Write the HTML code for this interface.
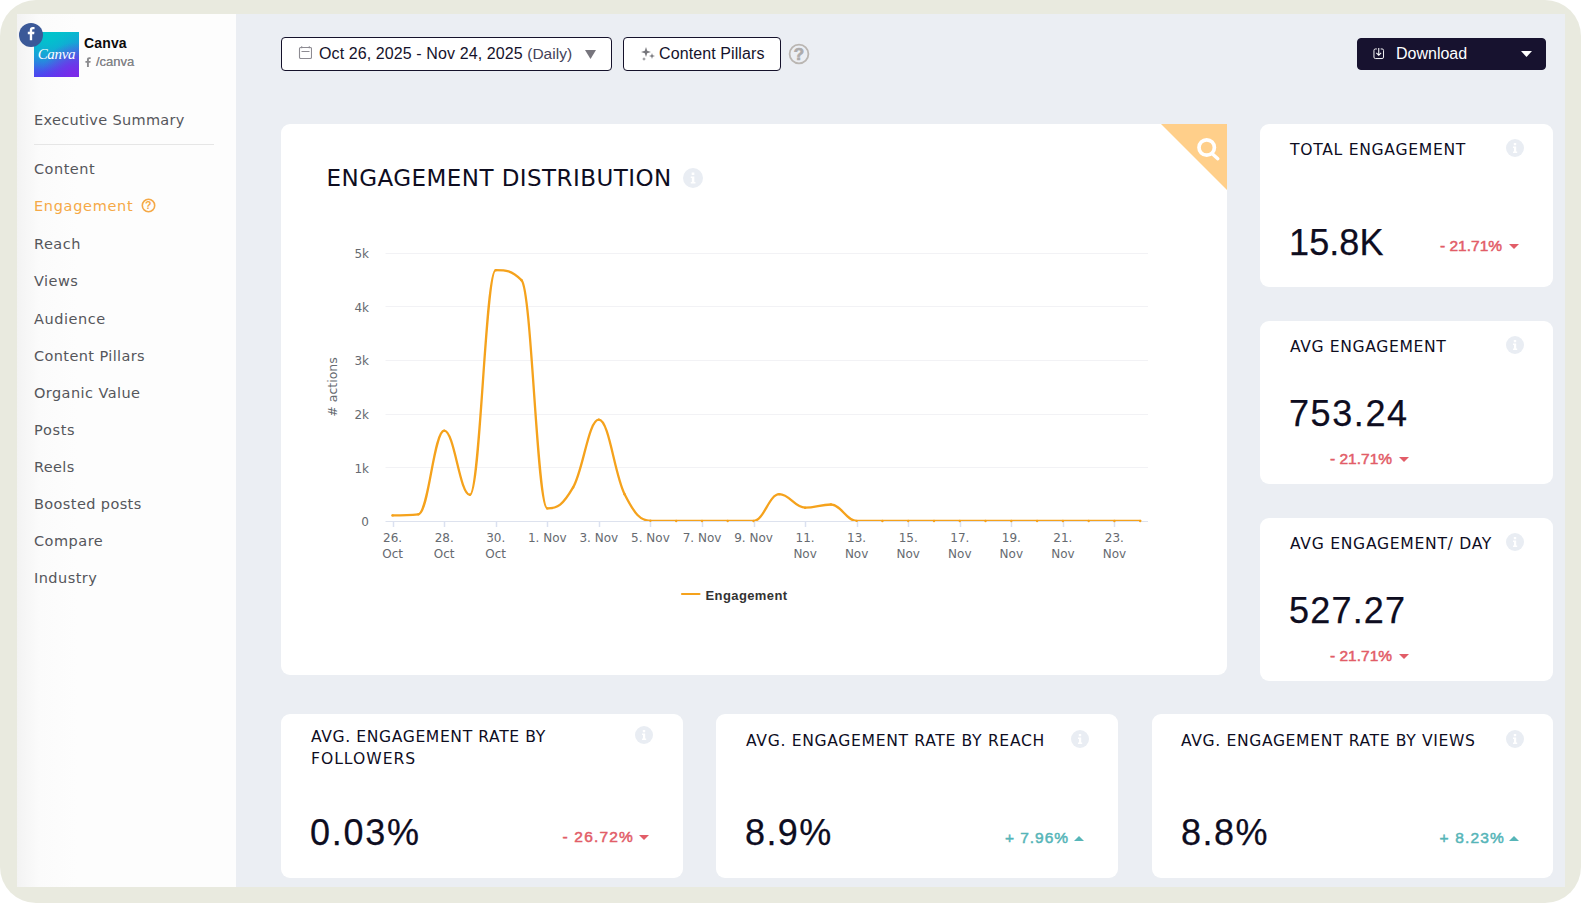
<!DOCTYPE html>
<html lang="en">
<head>
<meta charset="utf-8">
<title>Canva – Engagement</title>
<style>
*{box-sizing:border-box;margin:0;padding:0}
html,body{width:1581px;height:903px;overflow:hidden;background:#fff}
body{font-family:"DejaVu Sans","Liberation Sans",sans-serif;color:#0e0d1f;position:relative}
.frame{position:absolute;left:0;top:0;width:1581px;height:903px;background:#e9eadf;border-radius:36px}
.app{position:absolute;left:17px;top:14px;width:1548px;height:873px;background:#ebeef3;overflow:hidden}
/* ---------- sidebar ---------- */
.sidebar{position:absolute;left:0;top:0;width:219px;height:873px;background:linear-gradient(90deg,#f3f3f3 0,#fbfbfb 22px,#fdfdfd 60px,#fdfdfd 100%)}
.brand{position:absolute;left:0;top:0;width:219px;height:80px}
.brand .logo{position:absolute;left:17px;top:18px;width:45px;height:45px;background:
 radial-gradient(circle at 90% 95%,#7d2ae8 0,rgba(125,42,232,0) 55%),
 radial-gradient(circle at 30% 5%,#00c4cc 0,rgba(0,196,204,0) 70%),
 linear-gradient(172deg,#00c4cc 0,#2b86e0 50%,#5a2df5 100%);
 color:#fff;font:italic 15px/45px "Liberation Serif",serif;text-align:center;letter-spacing:-.3px}
.brand .fb{position:absolute;left:2px;top:9px;width:24px;height:24px;border-radius:50%;background:#3b5998}
.brand .fb svg{position:absolute;left:0;top:0}
.brand .name{position:absolute;left:67px;top:21px;letter-spacing:.15px;font:bold 14px/16px "Liberation Sans",sans-serif;color:#0b0b0b}
.brand .handle{position:absolute;left:68px;top:41px;font:13px/14px "Liberation Sans",sans-serif;color:#858589;white-space:nowrap;text-shadow:0 0 .4px #858589}
.brand .handle svg{vertical-align:-1px;margin-right:5px}
.nav{position:absolute;left:17px;top:0;list-style:none;font-size:14.5px;color:#55565b;letter-spacing:.35px}
.nav li{position:absolute;left:0;white-space:nowrap;line-height:20px}
.nav li.active{color:#f5a947}
.nav .sep{position:absolute;left:0;top:130px;width:180px;height:1px;background:#e6e6e6}
.nav .q{display:inline-block;vertical-align:-2px;margin-left:7.500px}
/* ---------- toolbar ---------- */
.btn{position:absolute;top:23px;height:34px;border:1px solid #15122b;border-radius:4px;background:#fff;font:16px/32px "Liberation Sans",sans-serif;color:#15122b;white-space:nowrap}
.btn svg{position:absolute}
.btn span{position:absolute;top:0}
.btn em{font-style:normal;font-size:15.500px;color:#45435a;letter-spacing:0}
.btn.dark{background:#17122f;color:#fff;border-color:#17122f;height:32px;top:24px;line-height:29px}
.help{position:absolute;left:770.700px;top:28.800px}
/* ---------- cards ---------- */
.card{position:absolute;background:#fff;border-radius:9px}
.card h3{position:absolute;font-weight:400;font-size:15.600px;line-height:22px;color:#0e0d1f;letter-spacing:.7px}
.card .val{position:absolute;font-family:"Liberation Sans",sans-serif;font-size:36px;line-height:44px;color:#0e0d1f;white-space:nowrap;-webkit-text-stroke:.25px #0e0d1f}
.card .chg{position:absolute;font-family:"Liberation Sans",sans-serif;font-size:15.500px;line-height:20px;white-space:nowrap;-webkit-text-stroke:.5px currentColor}
.chg.down{color:#e25d68}
.chg.up{color:#56b5b8}
.chg i{display:inline-block;width:0;height:0;border-left:5px solid transparent;border-right:5px solid transparent;margin-left:7px;vertical-align:2px}
.chg.down i{border-top:5px solid #e25d68}
.chg.up i{border-bottom:5px solid #56b5b8;vertical-align:2px}
.info{position:absolute;width:18px;height:18px;border-radius:50%;background:#e9edf3}
.info svg{position:absolute;left:0;top:0}
.chart h2{position:absolute;left:45.500px;top:39px;font-weight:400;font-size:23px;line-height:30px;white-space:nowrap;color:#0e0d1f;letter-spacing:.45px}
.zoomcorner{position:absolute;right:0;top:0;width:66px;height:66px;overflow:hidden}
</style>
</head>
<body>
<div class="frame"></div>
<div class="app">

<aside class="sidebar">
  <div class="brand">
    <div class="logo">Canva</div>
    <div class="fb"><svg width="24" height="24" viewBox="-0.780 0.880 25.300 25.300"><path fill="#fff" d="M13.1 19v-6.3h2.1l.3-2.5h-2.4V8.7c0-.7.2-1.2 1.2-1.2h1.3V5.3c-.2 0-1-.1-1.9-.1-1.9 0-3.100 1.100-3.100 3.200v1.800H8.500v2.500h2.100V19z"/></svg></div>
    <div class="name">Canva</div>
    <div class="handle"><svg width="6" height="10.500" viewBox="0 0 7 12"><path fill="#8b8b8e" d="M4.500 12V6.600h1.800l.3-2.100H4.500V3.200c0-.6.2-1 1-1h1.100V.3C6.400.2 5.800.2 5 .2 3.400.2 2.300 1.200 2.300 2.900v1.600H.5v2.100h1.800V12z"/></svg>/canva</div>
  </div>
  <ul class="nav">
    <li style="top:96px;letter-spacing:0.32px">Executive Summary</li>
    <li class="sep"></li>
    <li style="top:145px;letter-spacing:0.50px">Content</li>
    <li style="top:182px;letter-spacing:0.68px" class="active">Engagement<svg class="q" width="15" height="15" viewBox="0 0 15 15"><circle cx="7.500" cy="7.500" r="6.200" fill="none" stroke="#f5a947" stroke-width="1.600"/><text x="7.500" y="11.300" text-anchor="middle" font-family="Liberation Sans, sans-serif" font-weight="bold" font-size="10.500" fill="#f5a947">?</text></svg></li>
    <li style="top:220px;letter-spacing:0.50px">Reach</li>
    <li style="top:257px;letter-spacing:0.46px">Views</li>
    <li style="top:295px;letter-spacing:0.53px">Audience</li>
    <li style="top:332px;letter-spacing:0.39px">Content Pillars</li>
    <li style="top:369px;letter-spacing:0.43px">Organic Value</li>
    <li style="top:406px;letter-spacing:0.67px">Posts</li>
    <li style="top:443px;letter-spacing:0.36px">Reels</li>
    <li style="top:480px;letter-spacing:0.39px">Boosted posts</li>
    <li style="top:517px;letter-spacing:0.50px">Compare</li>
    <li style="top:554px;letter-spacing:0.45px">Industry</li>
  </ul>
</aside>

<!-- toolbar -->
<div class="btn" style="left:264px;width:331px">
  <svg style="left:16px;top:8px" width="14" height="14" viewBox="0 0 14 14"><rect x="1.500" y="1.500" width="12" height="11" rx="1.200" fill="none" stroke="#8d8b92" stroke-width="1.100"/><path d="M3.500 5.500h8M3.700 .3v2M11.300 .3v2" stroke="#8d8b92" stroke-width="1.100" fill="none"/></svg>
  <span style="left:37px;letter-spacing:.1px">Oct 26, 2025 - Nov 24, 2025 <em>(Daily)</em></span>
  <svg style="left:303px;top:12px" width="11" height="9" viewBox="0 0 11 9"><path d="M0 0h11L5.500 9z" fill="#77757d"/></svg>
</div>
<div class="btn" style="left:606px;width:158px">
  <svg style="left:17px;top:9px" width="14" height="14" viewBox="0 0 14 14"><path fill="#77777c" d="M5 0l1.200 3.800L10 5 6.200 6.200 5 10 3.800 6.200 0 5l3.800-1.200zM11 6l.7 2.300L14 9l-2.300.7L11 12l-.7-2.300L8 9l2.300-.7zM3 10l.5 1.500L5 12l-1.500.5L3 14l-.5-1.500L1 12l1.500-.5z"/></svg>
  <span style="left:35px;letter-spacing:.1px">Content Pillars</span>
</div>
<svg class="help" width="22" height="22" viewBox="0 0 22 22"><circle cx="11" cy="11" r="9.400" fill="none" stroke="#bab6b2" stroke-width="1.800"/><text x="11" y="17" text-anchor="middle" font-family="Liberation Sans, sans-serif" font-weight="bold" font-size="17" fill="#adabab" stroke="#adabab" stroke-width=".7">?</text></svg>
<div class="btn dark" style="left:1340px;width:189px">
  <svg style="left:15px;top:9px" width="11.500" height="11.500" viewBox="0 0 12 12"><path d="M4 1H2.500A1.500 1.500 0 0 0 1 2.500v7A1.500 1.500 0 0 0 2.500 11h7A1.500 1.500 0 0 0 11 9.500v-7A1.500 1.500 0 0 0 9.500 1H8" fill="none" stroke="#fff" stroke-width="1"/><path d="M6 0v7.500M3.500 5.200L6 7.700l2.500-2.500" fill="none" stroke="#fff" stroke-width="1.100"/></svg>
  <span style="left:38px">Download</span>
  <svg style="left:163px;top:12px" width="11" height="6" viewBox="0 0 11 6"><path d="M0 0h11L5.500 6z" fill="#fff"/></svg>
</div>

<!-- chart card -->
<section class="card chart" style="left:264px;top:110px;width:946px;height:551px">
  <h2>ENGAGEMENT DISTRIBUTION</h2>
  <div class="info" style="left:402px;top:44px;width:20px;height:20px"><svg width="20" height="20" viewBox="0 0 18 18"><path fill="#fff" d="M7.800 4h2.400v2.200H7.800zM7 7.600h3.200v5h1v1.400H7v-1.400h1V9H7z"/></svg></div>
  <div class="zoomcorner"><svg width="66" height="66" viewBox="0 0 66 66"><path d="M0 0h66v66z" fill="#ffcf8a"/><circle cx="45.700" cy="23.500" r="7.700" fill="none" stroke="#fff" stroke-width="3.700"/><path d="M51.800 30.300l5 4.400" stroke="#fff" stroke-width="3.400" stroke-linecap="round"/></svg></div>
  <!--CHART-START-->
  <svg class="hc" width="946" height="551" viewBox="0 0 946 551" style="position:absolute;left:0;top:0">
  <path d="M104.5 343.5 H867.0" stroke="#f2f2f5" stroke-width="1" fill="none"/>
  <path d="M104.5 290.5 H867.0" stroke="#f2f2f5" stroke-width="1" fill="none"/>
  <path d="M104.5 236.5 H867.0" stroke="#f2f2f5" stroke-width="1" fill="none"/>
  <path d="M104.5 182.5 H867.0" stroke="#f2f2f5" stroke-width="1" fill="none"/>
  <path d="M104.5 129.5 H867.0" stroke="#f2f2f5" stroke-width="1" fill="none"/>
  <path d="M104.5 397.5 H867.0" stroke="#dde2ee" stroke-width="1" fill="none"/>
  <path d="M112.5 397.5 v5.500" stroke="#dbe1f0" stroke-width="1.500" fill="none"/>
  <path d="M163.5 397.5 v5.500" stroke="#dbe1f0" stroke-width="1.500" fill="none"/>
  <path d="M215.5 397.5 v5.500" stroke="#dbe1f0" stroke-width="1.500" fill="none"/>
  <path d="M266.5 397.5 v5.500" stroke="#dbe1f0" stroke-width="1.500" fill="none"/>
  <path d="M318.5 397.5 v5.500" stroke="#dbe1f0" stroke-width="1.500" fill="none"/>
  <path d="M369.5 397.5 v5.500" stroke="#dbe1f0" stroke-width="1.500" fill="none"/>
  <path d="M421.5 397.5 v5.500" stroke="#dbe1f0" stroke-width="1.500" fill="none"/>
  <path d="M473.5 397.5 v5.500" stroke="#dbe1f0" stroke-width="1.500" fill="none"/>
  <path d="M524.5 397.5 v5.500" stroke="#dbe1f0" stroke-width="1.500" fill="none"/>
  <path d="M576.5 397.5 v5.500" stroke="#dbe1f0" stroke-width="1.500" fill="none"/>
  <path d="M627.5 397.5 v5.500" stroke="#dbe1f0" stroke-width="1.500" fill="none"/>
  <path d="M679.5 397.5 v5.500" stroke="#dbe1f0" stroke-width="1.500" fill="none"/>
  <path d="M730.5 397.5 v5.500" stroke="#dbe1f0" stroke-width="1.500" fill="none"/>
  <path d="M782.5 397.5 v5.500" stroke="#dbe1f0" stroke-width="1.500" fill="none"/>
  <path d="M833.5 397.5 v5.500" stroke="#dbe1f0" stroke-width="1.500" fill="none"/>
  <clipPath id="plotclip"><rect x="104.5" y="100.0" width="762.5" height="297.0"/></clipPath>
  <path d="M111.6 391.4 C111.6 391.4 127.1 391.4 137.4 390.3 C147.7 389.3 152.8 306.7 163.2 306.7 C173.5 306.7 178.6 370.8 188.9 370.8 C199.3 370.8 204.4 146.2 214.7 146.2 C225.0 146.2 230.2 146.2 240.5 156.2 C250.8 166.2 256.0 384.4 266.3 384.4 C276.6 384.4 281.7 381.2 292.1 363.4 C302.4 345.7 307.5 295.7 317.8 295.7 C328.2 295.7 333.3 349.9 343.6 370.2 C353.9 390.4 359.1 396.6 369.4 396.8 C379.7 397.0 384.9 397.0 395.2 397.0 C405.5 397.0 410.6 397.0 421.0 397.0 C431.3 397.0 436.4 397.0 446.7 397.0 C457.1 397.0 462.2 397.0 472.5 397.0 C482.8 397.0 488.0 370.2 498.3 370.2 C508.6 370.2 513.8 383.7 524.1 383.7 C534.4 383.7 539.5 380.5 549.9 380.5 C560.2 380.5 565.3 396.8 575.6 396.9 C586.0 397.0 591.1 397.0 601.4 397.0 C611.7 397.0 616.9 397.0 627.2 397.0 C637.5 397.0 642.7 397.0 653.0 397.0 C663.3 397.0 668.4 397.0 678.8 397.0 C689.1 397.0 694.2 397.0 704.5 397.0 C714.9 397.0 720.0 397.0 730.3 397.0 C740.6 397.0 745.8 397.0 756.1 397.0 C766.4 397.0 771.6 397.0 781.9 397.0 C792.2 397.0 797.3 397.0 807.7 397.0 C818.0 397.0 823.1 397.0 833.4 397.0 C843.8 397.0 859.2 397.0 859.2 397.0" fill="none" stroke="#f5a21c" stroke-width="2.3" stroke-linejoin="round" stroke-linecap="round" clip-path="url(#plotclip)"/>
  <g fill="#f5a21c"><circle cx="111.6" cy="391.4" r="1.2"/><circle cx="137.4" cy="390.3" r="1.2"/><circle cx="163.2" cy="306.7" r="1.2"/><circle cx="188.9" cy="370.8" r="1.2"/><circle cx="214.7" cy="146.2" r="1.2"/><circle cx="240.5" cy="156.2" r="1.2"/><circle cx="266.3" cy="384.4" r="1.2"/><circle cx="292.1" cy="363.4" r="1.2"/><circle cx="317.8" cy="295.7" r="1.2"/><circle cx="343.6" cy="370.2" r="1.2"/><circle cx="369.4" cy="396.8" r="1.2"/><circle cx="395.2" cy="397.0" r="1.2"/><circle cx="421.0" cy="397.0" r="1.2"/><circle cx="446.7" cy="397.0" r="1.2"/><circle cx="472.5" cy="397.0" r="1.2"/><circle cx="498.3" cy="370.2" r="1.2"/><circle cx="524.1" cy="383.7" r="1.2"/><circle cx="549.9" cy="380.5" r="1.2"/><circle cx="575.6" cy="396.9" r="1.2"/><circle cx="601.4" cy="397.0" r="1.2"/><circle cx="627.2" cy="397.0" r="1.2"/><circle cx="653.0" cy="397.0" r="1.2"/><circle cx="678.8" cy="397.0" r="1.2"/><circle cx="704.5" cy="397.0" r="1.2"/><circle cx="730.3" cy="397.0" r="1.2"/><circle cx="756.1" cy="397.0" r="1.2"/><circle cx="781.9" cy="397.0" r="1.2"/><circle cx="807.7" cy="397.0" r="1.2"/><circle cx="833.4" cy="397.0" r="1.2"/><circle cx="859.2" cy="397.0" r="1.2"/></g>
  <g font-family="DejaVu Sans, Liberation Sans, sans-serif" font-size="12" fill="#666a70">
  <text x="88.0" y="402.3" text-anchor="end">0</text>
  <text x="88.0" y="348.6" text-anchor="end">1k</text>
  <text x="88.0" y="294.9" text-anchor="end">2k</text>
  <text x="88.0" y="241.3" text-anchor="end">3k</text>
  <text x="88.0" y="187.6" text-anchor="end">4k</text>
  <text x="88.0" y="133.9" text-anchor="end">5k</text>
  <text x="111.6" y="418.0" text-anchor="middle">26.</text>
  <text x="111.6" y="434.0" text-anchor="middle">Oct</text>
  <text x="163.2" y="418.0" text-anchor="middle">28.</text>
  <text x="163.2" y="434.0" text-anchor="middle">Oct</text>
  <text x="214.7" y="418.0" text-anchor="middle">30.</text>
  <text x="214.7" y="434.0" text-anchor="middle">Oct</text>
  <text x="266.3" y="418.0" text-anchor="middle">1. Nov</text>
  <text x="317.8" y="418.0" text-anchor="middle">3. Nov</text>
  <text x="369.4" y="418.0" text-anchor="middle">5. Nov</text>
  <text x="421.0" y="418.0" text-anchor="middle">7. Nov</text>
  <text x="472.5" y="418.0" text-anchor="middle">9. Nov</text>
  <text x="524.1" y="418.0" text-anchor="middle">11.</text>
  <text x="524.1" y="434.0" text-anchor="middle">Nov</text>
  <text x="575.6" y="418.0" text-anchor="middle">13.</text>
  <text x="575.6" y="434.0" text-anchor="middle">Nov</text>
  <text x="627.2" y="418.0" text-anchor="middle">15.</text>
  <text x="627.2" y="434.0" text-anchor="middle">Nov</text>
  <text x="678.8" y="418.0" text-anchor="middle">17.</text>
  <text x="678.8" y="434.0" text-anchor="middle">Nov</text>
  <text x="730.3" y="418.0" text-anchor="middle">19.</text>
  <text x="730.3" y="434.0" text-anchor="middle">Nov</text>
  <text x="781.9" y="418.0" text-anchor="middle">21.</text>
  <text x="781.9" y="434.0" text-anchor="middle">Nov</text>
  <text x="833.4" y="418.0" text-anchor="middle">23.</text>
  <text x="833.4" y="434.0" text-anchor="middle">Nov</text>
  <text transform="translate(56.3 263.0) rotate(-90)" text-anchor="middle" font-size="12.500"># actions</text>
  </g>
  <path d="M401.0 470.0 h17.500" stroke="#f5a21c" stroke-width="2.200" stroke-linecap="round"/>
  <text x="424.5" y="475.5" font-family="Liberation Sans, sans-serif" font-weight="bold" font-size="13" letter-spacing=".4" fill="#333">Engagement</text>
  </svg>
  <!--CHART-END-->
</section>

<!-- right cards -->
<section class="card" style="left:1243px;top:110px;width:293px;height:163px">
  <h3 style="left:30px;top:15px">TOTAL ENGAGEMENT</h3>
  <div class="info" style="left:246px;top:15px"><svg width="18" height="18" viewBox="0 0 18 18"><path fill="#fff" d="M7.800 4h2.400v2.200H7.800zM7 7.600h3.200v5h1v1.400H7v-1.400h1V9H7z"/></svg></div>
  <div class="val" style="left:29px;top:97px;letter-spacing:0.11px">15.8K</div>
  <div class="chg down" style="left:180px;top:112px">- 21.71%<i></i></div>
</section>
<section class="card" style="left:1243px;top:307px;width:293px;height:163px">
  <h3 style="left:30px;top:15px;letter-spacing:.62px">AVG ENGAGEMENT</h3>
  <div class="info" style="left:246px;top:15px"><svg width="18" height="18" viewBox="0 0 18 18"><path fill="#fff" d="M7.800 4h2.400v2.200H7.800zM7 7.600h3.200v5h1v1.400H7v-1.400h1V9H7z"/></svg></div>
  <div class="val" style="left:29px;top:71px;letter-spacing:1.58px">753.24</div>
  <div class="chg down" style="left:70px;top:128px">- 21.71%<i></i></div>
</section>
<section class="card" style="left:1243px;top:504px;width:293px;height:163px">
  <h3 style="left:30px;top:15px">AVG ENGAGEMENT/ DAY</h3>
  <div class="info" style="left:246px;top:15px"><svg width="18" height="18" viewBox="0 0 18 18"><path fill="#fff" d="M7.800 4h2.400v2.200H7.800zM7 7.600h3.200v5h1v1.400H7v-1.400h1V9H7z"/></svg></div>
  <div class="val" style="left:29px;top:71px;letter-spacing:1.20px">527.27</div>
  <div class="chg down" style="left:70px;top:128px">- 21.71%<i></i></div>
</section>

<!-- bottom cards -->
<section class="card" style="left:264px;top:700px;width:402px;height:164px">
  <h3 style="left:30px;top:12px;width:300px;letter-spacing:.6px">AVG. ENGAGEMENT RATE BY <span style="letter-spacing:.98px">FOLLOWERS</span></h3>
  <div class="info" style="left:354px;top:12px"><svg width="18" height="18" viewBox="0 0 18 18"><path fill="#fff" d="M7.800 4h2.400v2.200H7.800zM7 7.600h3.200v5h1v1.400H7v-1.400h1V9H7z"/></svg></div>
  <div class="val" style="left:29px;top:97px;letter-spacing:1.75px">0.03%</div>
  <div class="chg down" style="left:281.500px;top:113px;letter-spacing:1.19px">- 26.72%<i style="margin-left:5px"></i></div>
</section>
<section class="card" style="left:699px;top:700px;width:402px;height:164px">
  <h3 style="left:30px;top:16px;letter-spacing:.66px">AVG. ENGAGEMENT RATE BY REACH</h3>
  <div class="info" style="left:355px;top:16px"><svg width="18" height="18" viewBox="0 0 18 18"><path fill="#fff" d="M7.800 4h2.400v2.200H7.800zM7 7.600h3.200v5h1v1.400H7v-1.400h1V9H7z"/></svg></div>
  <div class="val" style="left:29px;top:97px;letter-spacing:1.41px">8.9%</div>
  <div class="chg up" style="left:289px;top:114px;letter-spacing:0.96px">+ 7.96%<i style="margin-left:5px"></i></div>
</section>
<section class="card" style="left:1135px;top:700px;width:401px;height:164px">
  <h3 style="left:29px;top:16px;letter-spacing:.62px">AVG. ENGAGEMENT RATE BY VIEWS</h3>
  <div class="info" style="left:354px;top:16px"><svg width="18" height="18" viewBox="0 0 18 18"><path fill="#fff" d="M7.800 4h2.400v2.200H7.800zM7 7.600h3.200v5h1v1.400H7v-1.400h1V9H7z"/></svg></div>
  <div class="val" style="left:29px;top:97px;letter-spacing:1.48px">8.8%</div>
  <div class="chg up" style="left:287.500px;top:114px;letter-spacing:1.15px">+ 8.23%<i style="margin-left:4.500px"></i></div>
</section>

</div>
</body>
</html>
